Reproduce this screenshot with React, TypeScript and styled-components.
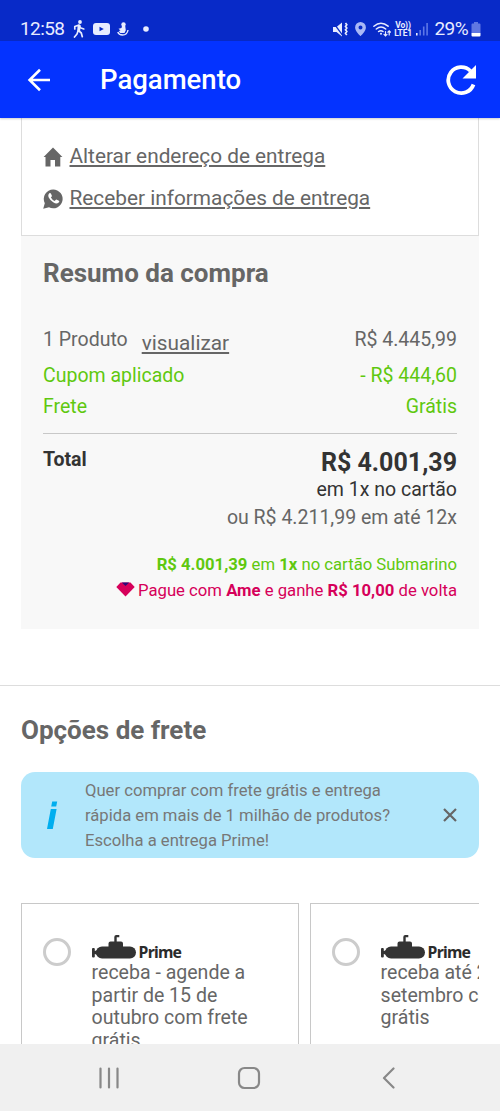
import React from 'react';
import styled, { createGlobalStyle } from 'styled-components';

const GlobalStyle = createGlobalStyle`
  * { box-sizing: border-box; }
  body { margin: 0; background: #fff; font-family: Roboto, "Liberation Sans", sans-serif; color: #666; overflow: hidden; }
  b { font-weight: 700; }
`;

const Screen = styled.div`
  width: 500px;
  height: 1111px;
  display: flex;
  flex-direction: column;
  overflow: hidden;
  background: #fff;
`;

const StatusBar = styled.div`
  flex: none;
  height: 41px;
  padding: 16px 19px 0 20px;
  display: flex;
  justify-content: space-between;
  background: #082ac8;
  color: #e8ecff;
`;

const StatusGroup = styled.div`
  display: flex;
  height: 26px;
  align-items: center;
`;

const StatusText = styled.span<{ $gap?: number }>`
  font-size: 19px;
  line-height: 26px;
  letter-spacing: -0.6px;
  margin-right: ${p => p.$gap ?? 0}px;
  white-space: nowrap;
`;

const StatusIcon = styled.svg<{ $gap?: number }>`
  display: block;
  flex: none;
  margin-right: ${p => p.$gap ?? 0}px;
`;

const Lte = styled.div`
  width: 19px;
  margin-right: 3px;
  display: flex;
  flex-direction: column;
  align-items: center;
  font-size: 8.5px;
  line-height: 8px;
  font-weight: 700;
  letter-spacing: -0.2px;
`;

const AppBar = styled.header`
  flex: none;
  height: 77px;
  padding: 1px 23px 0 27px;
  display: flex;
  align-items: center;
  background: #0433ff;
  color: #fff;
  box-shadow: 0 1px 2px rgba(0, 0, 0, 0.2);
  z-index: 1;
`;

const AppTitle = styled.h1`
  flex: 1;
  margin: 0 0 0 49px;
  font-size: 27.5px;
  line-height: 32px;
  font-weight: 500;
`;

const Content = styled.main`
  flex: 1;
  min-height: 0;
  overflow: hidden;
`;

const AddressBox = styled.section`
  margin: 0 21px;
  height: 118px;
  padding: 17px 21px 0;
  border: 1px solid #ddd;
  border-top: 0;
`;

const AddressRow = styled.div`
  display: flex;
  align-items: center;
  height: 42px;
  gap: 6.5px;

  svg { margin-top: 2px; }
`;

const Link = styled.a`
  font-size: 20.8px;
  line-height: 24px;
  color: #666;
  text-decoration: underline;
  text-decoration-thickness: 1.5px;
  text-underline-offset: 2px;
  white-space: nowrap;
`;

const Summary = styled.section`
  margin: 0 21px;
  height: 393px;
  padding: 21px 22px 0;
  background: #f8f8f8;
`;

const Heading = styled.h2`
  margin: 0;
  font-size: 26px;
  line-height: 32px;
  font-weight: 700;
  color: #666;
`;

const Line = styled.div<{ $h: number; $green?: boolean }>`
  display: flex;
  justify-content: space-between;
  align-items: center;
  height: ${p => p.$h}px;
  font-size: 19.5px;
  color: ${p => (p.$green ? '#5fc80f' : '#666')};
`;

const Product = styled.span`
  display: flex;
  align-items: center;
  gap: 14px;
`;

const ViewLink = styled(Link)`
  margin-top: 6px;
`;

const LineList = styled.div`
  margin-top: 34px;
  height: 111px;
  border-bottom: 1px solid #c8c8c8;
`;

const Totals = styled.div`
  display: flex;
  justify-content: space-between;
  padding-top: 14px;
`;

const TotalLabel = styled.strong`
  font-size: 19.5px;
  line-height: 24px;
  color: #333;
`;

const Amounts = styled.div`
  display: flex;
  flex-direction: column;
  align-items: flex-end;
`;

const Amount = styled.div<{ $size: number; $h: number; $color: string; $bold?: boolean }>`
  font-size: ${p => p.$size}px;
  line-height: ${p => p.$h}px;
  height: ${p => p.$h}px;
  color: ${p => p.$color};
  font-weight: ${p => (p.$bold ? 700 : 400)};
  white-space: nowrap;
`;

const Offers = styled.div`
  margin-top: 17px;
  display: flex;
  flex-direction: column;
  align-items: flex-end;
`;

const Offer = styled.div<{ $color: string }>`
  display: flex;
  align-items: center;
  gap: 3px;
  height: 26px;
  font-size: 16.7px;
  color: ${p => p.$color};
  white-space: nowrap;

  svg { margin-top: -2px; }
`;

const Freight = styled.section`
  margin-top: 56px;
  border-top: 1px solid #ddd;
  padding: 28px 21px 0;
`;

const Notice = styled.div`
  margin-top: 26px;
  height: 86px;
  border-radius: 14px;
  background: #b2e7fb;
  display: flex;
  align-items: center;
  padding: 0 21px 0 25px;
`;

const NoticeText = styled.p`
  flex: 1;
  margin: 0 0 0 25px;
  font-size: 16.65px;
  line-height: 25px;
  color: #777;
  white-space: nowrap;
`;

const Cards = styled.div`
  margin-top: 45px;
  display: flex;
  gap: 11px;
  overflow: hidden;
`;

const Card = styled.article`
  flex: none;
  width: 278px;
  height: 200px;
  border: 1.5px solid #c8c8c8;
  padding: 31px 0 0 21px;
  display: flex;
  gap: 20.6px;
`;

const Radio = styled.span`
  flex: none;
  width: 28px;
  height: 28px;
  margin-top: 3px;
  border: 3px solid #ccc;
  border-radius: 50%;
`;

const CardBody = styled.div`
  font-size: 19.55px;
  line-height: 22.7px;
  white-space: nowrap;
`;

const PrimeRow = styled.div`
  display: flex;
  align-items: flex-end;
  height: 27px;
  gap: 2px;
  padding-bottom: 3px;
`;

const PrimeText = styled.span`
  font-family: "Noto Sans", sans-serif;
  font-size: 15.8px;
  line-height: 14px;
  font-weight: 700;
  letter-spacing: -0.75px;
  color: #2b2b2b;
`;

const NavBar = styled.nav`
  flex: none;
  height: 67px;
  background: #f0f0f0;
  padding: 0 104px 0 98px;
  display: flex;
  align-items: center;
  justify-content: space-between;
`;

const Glyph = styled.svg`
  display: block;
  flex: none;
`;

const HomeGlyph = styled(Glyph)`
  margin-right: 5px;
`;

const PrimeLabel = () => (
  <PrimeRow>
    <Glyph width="45" height="24" viewBox="0 0 45 24" fill="#333">
      <rect x="4" y="11.5" width="40" height="12" rx="6" />
      <path d="M0 14q0-1 1-1h.8q1 0 1 1v2l3-1v5l-3-1v2.400q0 1-1 1H1q-1 0-1-1z" />
      <path d="M16.500 12V8.500q0-2 2-2h3.800V2q0-2 2-2h3v2.200h-2.600v4.300h4.300q2 0 2 2V12z" />
    </Glyph>
    <PrimeText>Prime</PrimeText>
  </PrimeRow>
);

export default function App() {
  return (
    <Screen>
      <GlobalStyle />
      <StatusBar>
        <StatusGroup>
          <StatusText $gap={9}>12:58</StatusText>
          <StatusIcon $gap={7} width="13" height="18" viewBox="0 0 13 18" fill="none" stroke="currentColor" strokeWidth="1.7" strokeLinecap="round" strokeLinejoin="round">
            <circle cx="7" cy="2" r="1.900" fill="currentColor" stroke="none" />
            <path d="M1.800 9V6.500L6 5l1.300 2.800L10.800 9" />
            <path d="M5.500 5.500h1.300L6.300 11H5z" fill="currentColor" />
            <path d="M6 11l2.300 2 1 3.700M5 11l-1 3-2.500 3" />
          </StatusIcon>
          <StatusIcon $gap={7} width="17" height="12" viewBox="0 0 17 12">
            <rect width="17" height="12" rx="3" fill="currentColor" />
            <path d="M6.500 3.800v4.400L10.800 6z" fill="#082ac8" />
          </StatusIcon>
          <StatusIcon $gap={14} width="12" height="14" viewBox="0 0 12 14" fill="currentColor">
            <circle cx="6.500" cy="2.400" r="2.200" />
            <path d="M5 4h3.200l.6 4.200L7.500 11H3.200L1.800 9l1.700-.6-2-1.600L4.500 6z" />
            <path d="M.8 10q1 3 4.700 3 4.700 0 5.500-5" fill="none" stroke="currentColor" strokeWidth="1.400" />
          </StatusIcon>
          <StatusIcon width="6" height="6" viewBox="0 0 6 6" fill="currentColor"><circle cx="3" cy="3" r="2.800" /></StatusIcon>
        </StatusGroup>
        <StatusGroup>
          <StatusIcon $gap={7} width="15" height="15" viewBox="0 0 15 15" fill="currentColor">
            <path d="M0 5h3.500L9 .5v14L3.500 10H0z" />
            <path d="M.5.8l9.500 13" stroke="#082ac8" strokeWidth="1.300" />
            <path d="M12.500 1l1.300 1.700-1.300 1.700 1.300 1.700-1.300 1.700 1.300 1.700-1.300 1.700 1.300 1.700" fill="none" stroke="currentColor" strokeWidth="1.700" />
          </StatusIcon>
          <StatusIcon $gap={7} width="11" height="14" viewBox="0 0 11 14">
            <path d="M5.500 0A5.400 5.400 0 0 0 .1 5.400C.1 9.400 5.500 14 5.500 14s5.400-4.600 5.400-8.600A5.400 5.400 0 0 0 5.500 0zm0 3.400a2 2 0 1 1 0 4 2 2 0 0 1 0-4z" fill="#aab8f6" />
          </StatusIcon>
          <StatusIcon $gap={3} width="18" height="15" viewBox="0 0 18 15" fill="none" stroke="currentColor" strokeWidth="1.500" strokeLinecap="round">
            <path d="M.9 4.200q7-6 14.200 0M3.300 7q4.700-4 9.400 0M5.600 9.500Q8 7.800 10 9.500" />
            <circle cx="8" cy="11.700" r="1" fill="currentColor" stroke="none" />
            <path d="M12.500 9.500v4M11 12.300l1.500 1.500 1.500-1.500M16.200 13V9M14.900 10.200l1.300-1.400 1.300 1.400" strokeWidth="1.200" />
          </StatusIcon>
          <Lte><span>Vo))</span><span>LTE1</span></Lte>
          <StatusIcon $gap={7} width="12" height="14" viewBox="0 0 12 14">
            <path d="M0 11h1.600v2.500H0z" fill="currentColor" />
            <path d="M3.400 8H5v5.500H3.400zM6.900 4.500h1.600v9H6.900zM10.300 1h1.600v12.500h-1.600z" fill="#5e77e6" />
          </StatusIcon>
          <StatusText $gap={3}>29%</StatusText>
          <StatusIcon width="10" height="15" viewBox="0 0 10 15">
            <path d="M3 0h4v1.500h1.500q1 0 1 1V11H.5V2.500q0-1 1-1H3z" fill="#6077e2" />
            <path d="M.5 11h9v2.500q0 1-1 1h-7q-1 0-1-1z" fill="#fff" />
          </StatusIcon>
        </StatusGroup>
      </StatusBar>

      <AppBar>
        <Glyph width="24" height="24" viewBox="0 0 24 24" fill="none" stroke="#fff" strokeWidth="2.600">
          <path d="M23 12H3M13 1.800L2.600 12 13 22.200" />
        </Glyph>
        <AppTitle>Pagamento</AppTitle>
        <Glyph width="32" height="32" viewBox="0 0 32 32">
          <path d="M28.500 20.500A13 13 0 1 1 25.500 7" fill="none" stroke="#fff" strokeWidth="3.800" />
          <path d="M31 1v13.500H17.500z" fill="#fff" />
        </Glyph>
      </AppBar>

      <Content>
        <AddressBox>
          <AddressRow>
            <Glyph width="20" height="20" viewBox="0 0 20 20" fill="#666">
              <path d="M10 .5L.6 10H2.500v9.500h5V13h4.500v6.500h5.300V10h2.100z" />
            </Glyph>
            <Link>Alterar endereço de entrega</Link>
          </AddressRow>
          <AddressRow>
            <Glyph width="20" height="20" viewBox="0 0 20 20">
              <path d="M10.200.5a9.400 9.400 0 0 0-8.400 13.700L.2 19.800l5.800-1.500A9.400 9.400 0 1 0 10.200.5z" fill="#666" />
              <path d="M5.500 5.500q1.400-2.500 2.500-.7l.9 1.900q.2.700-1 1.900 1.300 2.400 3.700 3.500l1.300-1.400q.5-.4 1 0l2 1q1.200.8-.5 2.100-2 1.400-5.200-.6-3.400-2.200-4.600-5-.6-1.500-.1-2.700z" fill="#fff" />
            </Glyph>
            <Link>Receber informações de entrega</Link>
          </AddressRow>
        </AddressBox>

        <Summary>
          <Heading>Resumo da compra</Heading>
          <LineList>
            <Line $h={33}>
              <Product>1 Produto <ViewLink>visualizar</ViewLink></Product>
              <span>R$ 4.445,99</span>
            </Line>
            <Line $h={39} $green><span>Cupom aplicado</span><span>- R$ 444,60</span></Line>
            <Line $h={22} $green><span>Frete</span><span>Grátis</span></Line>
          </LineList>
          <Totals>
            <TotalLabel>Total</TotalLabel>
            <Amounts>
              <Amount $size={25} $h={30} $color="#333" $bold>R$ 4.001,39</Amount>
              <Amount $size={19.5} $h={23} $color="#333">em 1x no cartão</Amount>
              <Amount $size={19.5} $h={33} $color="#666">ou R$ 4.211,99 em até 12x</Amount>
            </Amounts>
          </Totals>
          <Offers>
            <Offer $color="#5fc80f"><span><b>R$ 4.001,39</b> em <b>1x</b> no cartão Submarino</span></Offer>
            <Offer $color="#d6005a">
              <Glyph width="19" height="15" viewBox="0 0 19 15">
                <path d="M4.500.5h10L18.700 5 9.500 14.500.3 5z" fill="#d6005a" />
                <path d="M5.800.5h7.400L9.500 4z" fill="#2b0a78" />
              </Glyph>
              <span>Pague com <b>Ame</b> e ganhe <b>R$ 10,00</b> de volta</span>
            </Offer>
          </Offers>
        </Summary>

        <Freight>
          <Heading>Opções de frete</Heading>
          <Notice>
            <Glyph width="14" height="30" viewBox="0 0 14 30" fill="#00aeef">
              <path d="M6.200 1.500h5l-1 5h-5zM4.800 9h5.800L6.800 29H1z" />
            </Glyph>
            <NoticeText>
              Quer comprar com frete grátis e entrega<br />
              rápida em mais de 1 milhão de produtos?<br />
              Escolha a entrega Prime!
            </NoticeText>
            <Glyph width="16" height="16" viewBox="0 0 16 16" fill="none" stroke="#666" strokeWidth="2.200">
              <path d="M2 2l12 12M14 2L2 14" />
            </Glyph>
          </Notice>
          <Cards>
            <Card>
              <Radio />
              <CardBody>
                <PrimeLabel />
                receba - agende a<br />partir de 15 de<br />outubro com frete<br />grátis
              </CardBody>
            </Card>
            <Card>
              <Radio />
              <CardBody>
                <PrimeLabel />
                receba até 22 de<br />setembro com frete<br />grátis
              </CardBody>
            </Card>
          </Cards>
        </Freight>
      </Content>

      <NavBar>
        <Glyph width="22" height="22" viewBox="0 0 22 22" stroke="#888" strokeWidth="2.200" strokeLinecap="round">
          <path d="M2.500 1.500v19M11 1.500v19M19.500 1.500v19" />
        </Glyph>
        <HomeGlyph width="24" height="24" viewBox="0 0 24 24" fill="none" stroke="#888" strokeWidth="2.200">
          <rect x="2" y="2" width="20" height="20" rx="5.500" />
        </HomeGlyph>
        <Glyph width="14" height="22" viewBox="0 0 14 22" fill="none" stroke="#888" strokeWidth="2.200" strokeLinecap="round" strokeLinejoin="round">
          <path d="M11.500 1.500L2 11l9.500 9.500" />
        </Glyph>
      </NavBar>
    </Screen>
  );
}
